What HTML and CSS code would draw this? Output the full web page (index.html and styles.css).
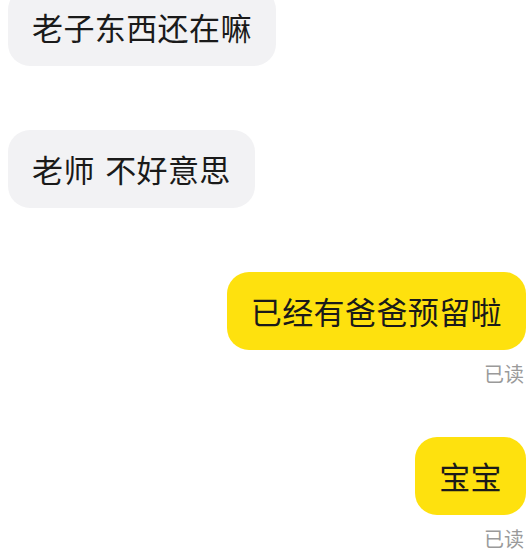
FILE: index.html
```html
<!DOCTYPE html>
<html lang="zh-CN">
<head>
    <meta charset="UTF-8" />
    <meta name="viewport" content="width=device-width, initial-scale=1.0" />
    <title>聊天</title>
    <link rel="stylesheet" href="styles.css">
</head>
<body>

<div class="chat">
    <div class="msg in first">
        <div class="bubble">老子东西还在嘛</div>
    </div>
    <div class="msg in">
        <div class="bubble">老师 不好意思</div>
    </div>
    <div class="msg out read">
        <div class="bubble">已经有爸爸预留啦</div>
        <div class="receipt">已读</div>
    </div>
    <div class="msg out read">
        <div class="bubble">宝宝</div>
        <div class="receipt">已读</div>
    </div>
</div>

</body>
</html>
```

FILE: styles.css
```css
body {
    margin: 0;
    background-color: #ffffff;
    font-family: "Noto Sans CJK SC", "Noto Sans", sans-serif;
    overflow: hidden;
}
.chat {
    display: flex;
    flex-direction: column;
    padding: 0 6px 0 8px;
}
.msg {
    display: flex;
    flex-direction: column;
    margin-bottom: 64px;
}
.msg.first {
    margin-top: -12px;
}
.msg.in {
    align-items: flex-start;
}
.msg.out {
    align-items: flex-end;
}
.msg.read {
    margin-bottom: 51px;
}
.msg:last-child {
    margin-bottom: 0;
}
.bubble {
    padding: 19px 24px;
    font-size: 31px;
    line-height: 40px;
    letter-spacing: 0.4px;
    word-spacing: 3px;
    color: #1a1a1a;
    border-radius: 22px;
    white-space: nowrap;
}
.in .bubble {
    background-color: #f2f2f4;
}
.out .bubble {
    background-color: #fee10e;
}
.receipt {
    margin-top: 12px;
    padding-right: 2px;
    font-size: 20px;
    line-height: 24px;
    color: #9a9a9a;
}
```
